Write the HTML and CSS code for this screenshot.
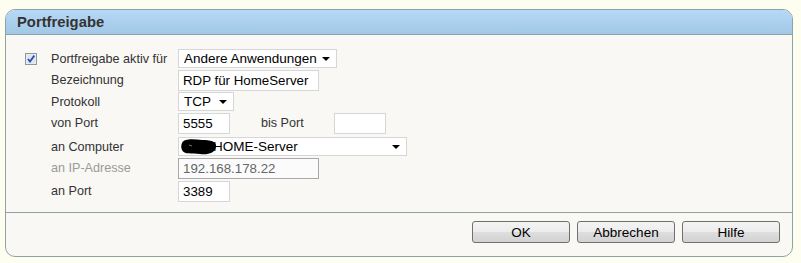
FILE: index.html
```html
<!doctype html>
<html>
  <head>
    <title>Portfreigabe</title>
    <meta http-equiv="Content-Type" content="text/html; charset=utf-8" />
    <link rel="stylesheet" href="styles.css">
  </head>
  <body>
    <div class="panel">
      <div class="panel-head">Portfreigabe</div>
      <div class="panel-body">
        <div class="row row-select">
          <span class="check">
            <svg width="12" height="12" viewBox="0 0 12 12">
              <rect x="0.5" y="0.5" width="11" height="11" fill="#eef1f5" stroke="#8e99a6" />
              <rect x="1.5" y="1.5" width="9" height="9" fill="#dfe6ee" />
              <path d="M3 6 L5 8.5 L9.3 2.6" fill="none" stroke="#2a4fb3" stroke-width="1.8" />
            </svg>
          </span>
          <label class="lbl">Portfreigabe aktiv für</label>
          <div class="select w-app">Andere Anwendungen<span class="arrow"></span></div>
        </div>
        <div class="row">
          <label class="lbl">Bezeichnung</label>
          <div class="input w-name">RDP für HomeServer</div>
        </div>
        <div class="row row-select">
          <label class="lbl">Protokoll</label>
          <div class="select w-proto">TCP<span class="arrow"></span></div>
        </div>
        <div class="row row-tall">
          <label class="lbl">von Port</label>
          <div class="input w-port">5555</div>
          <label class="lbl-mid">bis Port</label>
          <div class="input w-port"></div>
        </div>
        <div class="row row-select">
          <label class="lbl">an Computer</label>
          <div class="select w-pc">
            <span class="blot">
              <svg width="38" height="18" viewBox="0 0 38 18">
                <path d="M2 5 C4 0 14 1 22 2 C30 2 37 3 36 9 C35 15 28 17 20 16 C12 15 4 17 2 12 C1 10 1 7 2 5 Z" fill="#000" />
                <path d="M9 7 L12 8" stroke="#777" stroke-width="1" />
              </svg>
            </span>
            <span class="pc-name">HOME-Server</span><span class="arrow"></span>
          </div>
        </div>
        <div class="row row-mid">
          <label class="lbl lbl-off">an IP-Adresse</label>
          <div class="input input-off w-name">192.168.178.22</div>
        </div>
        <div class="row">
          <label class="lbl">an Port</label>
          <div class="input w-port">3389</div>
        </div>
      </div>
      <div class="panel-foot">
        <button class="btn">OK</button>
        <button class="btn">Abbrechen</button>
        <button class="btn">Hilfe</button>
      </div>
    </div>
  </body>
</html>
```

FILE: styles.css
```css
* {
  margin: 0px;
  padding: 0px;
  box-sizing: border-box;
}
body {
  background-color: #fefef0;
  padding: 9px 8px 0 5px;
  font-family: "Liberation Sans", Arial, sans-serif;
  color: #333;
}
.panel {
  width: 788px;
  height: 248px;
  border: 1px solid #8ea4a2;
  border-radius: 10px;
  background-color: #f9f8f5;
  overflow: hidden;
}
.panel-head {
  height: 25px;
  padding-left: 11px;
  line-height: 24px;
  font-size: 14.8px;
  font-weight: bold;
  color: #333;
  background: linear-gradient(#b5d8f5, #a2c8e7);
  border-bottom: 1px solid #8ea4a2;
}
.panel-body {
  height: 178px;
  padding: 14px 0 0 45px;
  border-bottom: 1px solid #8ea4a2;
}
.row {
  position: relative;
  display: flex;
  align-items: flex-start;
  height: 22px;
}
.row-select {
  height: 21px;
}
.row-tall {
  height: 24px;
}
.row-mid {
  height: 23px;
}
.check {
  position: absolute;
  left: -26px;
  top: 4px;
  width: 12px;
  height: 12px;
}
.check svg {
  display: block;
}
.lbl {
  width: 127px;
  font-size: 12.6px;
  line-height: 20px;
  color: #333;
}
.lbl-off {
  color: #9a9a9a;
}
.lbl-mid {
  width: 73px;
  margin-left: 31px;
  font-size: 12.6px;
  line-height: 20px;
}
.input {
  height: 21px;
  padding-left: 4px;
  border: 1px solid #d6d6d6;
  background-color: #fff;
  font-size: 13.3px;
  line-height: 19px;
  color: #000;
}
.input-off {
  border-color: #a8a8a8;
  color: #666;
  background-color: #fbfbfb;
}
.select {
  position: relative;
  height: 19px;
  padding-left: 5px;
  border: 1px solid #d6d6d6;
  background-color: #fff;
  font-size: 13.5px;
  line-height: 17px;
  color: #000;
}
.arrow {
  position: absolute;
  right: 6px;
  top: 7px;
  width: 0;
  height: 0;
  border-left: 4px solid transparent;
  border-right: 4px solid transparent;
  border-top: 4px solid #000;
}
.blot {
  position: absolute;
  left: 1px;
  top: 0px;
}
.blot svg {
  display: block;
}
.pc-name {
  margin-left: 29px;
}
.w-app {
  width: 159px;
}
.w-name {
  width: 141px;
}
.w-proto {
  width: 56px;
}
.w-port {
  width: 52px;
}
.w-pc {
  width: 229px;
}
.panel-foot {
  display: flex;
  justify-content: flex-end;
  gap: 7px;
  padding: 8px 12px 0 0;
}
.btn {
  width: 98px;
  height: 22px;
  border: 1px solid #707070;
  border-radius: 3px;
  background: linear-gradient(#f4f4f4 0%, #ececec 48%, #dedede 52%, #d2d2d2 100%);
  font-family: "Liberation Sans", Arial, sans-serif;
  font-size: 13.5px;
  color: #000;
}
```
